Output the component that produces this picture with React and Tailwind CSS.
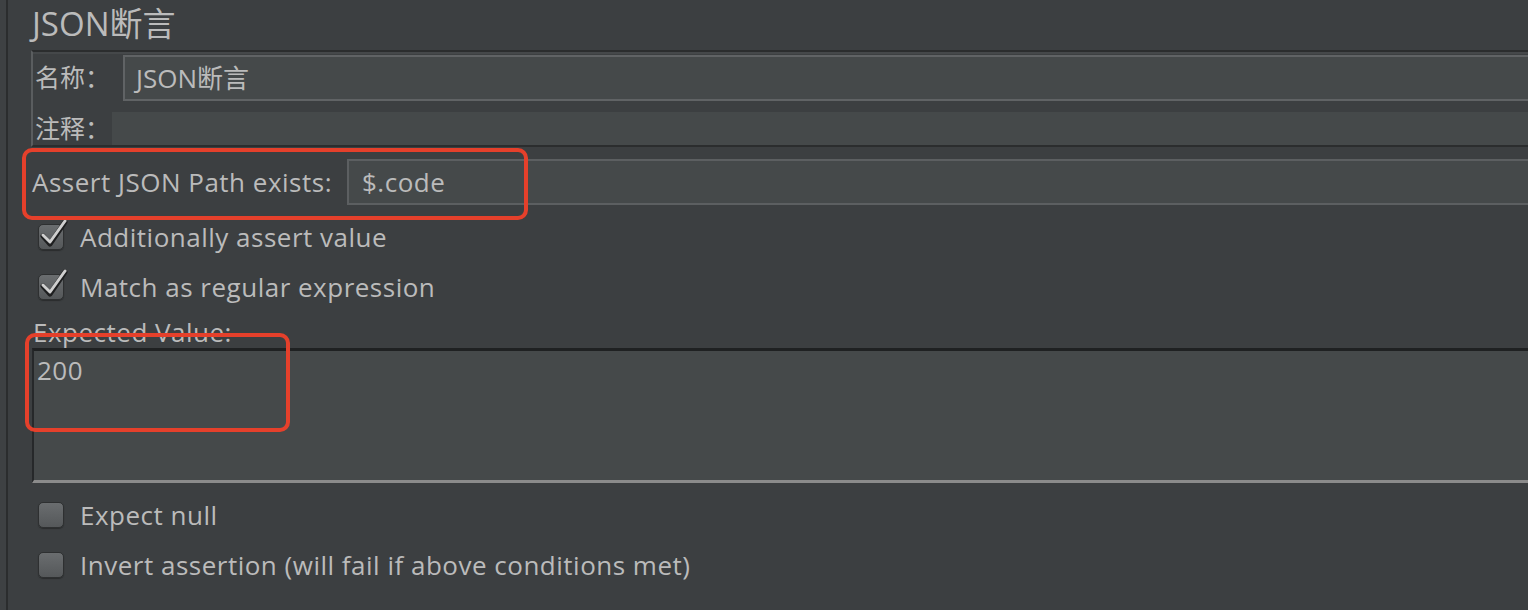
import React from 'react';

const font = { fontFamily: '"Open Sans", "Noto Sans CJK SC", sans-serif' };

function Checkbox({ checked }) {
  return (
    <div className="relative w-[26px] h-[26px] shrink-0">
      <div className="absolute inset-0 rounded-[5px] bg-gradient-to-b from-[#6a6d6f] to-[#55585a] border border-[#2e3031] shadow-[0_1px_1px_#2a2c2d]" />
      {checked && (
        <svg className="absolute left-[2px] top-[-5px]" width="28" height="30" viewBox="0 0 28 30">
          <path d="M3 17 L10 25 L25 3" fill="none" stroke="#1e1f20" strokeWidth="5" strokeLinecap="round" strokeLinejoin="round" />
          <path d="M3 16 L10 23 L25 2" fill="none" stroke="#cfcfcf" strokeWidth="3" strokeLinecap="round" strokeLinejoin="round" />
        </svg>
      )}
    </div>
  );
}

function CheckRow({ checked, label }) {
  return (
    <div className="h-[50px] flex items-center pl-[7px] gap-[16px]">
      <Checkbox checked={checked} />
      <span className="text-[26px] tracking-[0.5px] text-[#bbbbbb] leading-none">{label}</span>
    </div>
  );
}

export default function App() {
  return (
    <div className="relative w-[1528px] h-[610px] bg-[#3c3f41] overflow-hidden flex" style={font}>
      <div className="w-[8px] shrink-0 bg-[#3e4143] border-r-2 border-[#2b2d2e]" />
      <div className="flex-1 flex flex-col pl-[23px]">
        <div className="h-[50px] flex items-start">
          <span className="block text-[33px] text-[#bbbbbb] leading-[48px] pl-[1px]">JSON断言</span>
        </div>

        <div className="h-[97px] border-t-2 border-l-2 border-b-2 border-t-[#2b2d2e] border-l-[#5a5d5f] border-b-[#2b2d2e] flex flex-col">
          <div className="h-[2px] bg-[#45484a]" />
          <div className="h-[46px] flex items-center mt-[1px]">
            <span className="w-[90px] pl-[2px] text-[25px] text-[#bbbbbb]">名称：</span>
            <div className="flex-1 h-full bg-[#45494a] border-2 border-[#606365] border-r-0 flex items-center pl-[11px] text-[26px] text-[#bbbbbb]">
              JSON断言
            </div>
          </div>
          <div className="h-[33px] flex items-center mt-[11px]">
            <span className="w-[79px] pl-[2px] text-[25px] text-[#bbbbbb]">注释：</span>
            <div className="flex-1 h-full bg-[#45494a]" />
          </div>
        </div>

        <div className="h-[46px] mt-[12px] flex items-center">
          <span className="w-[316px] pl-[1px] text-[26px] tracking-[0.5px] text-[#bbbbbb]">Assert JSON Path exists:</span>
          <div className="flex-1 h-full bg-[#45494a] border-2 border-[#5c5f61] border-r-0 flex items-center pl-[13px] text-[26px] tracking-[0.5px] text-[#bbbbbb]">
            $.code
          </div>
        </div>

        <div className="mt-[7px]">
          <CheckRow checked label="Additionally assert value" />
          <CheckRow checked label="Match as regular expression" />
        </div>

        <div className="h-[36px] flex items-center pl-[2px]">
          <span className="text-[26px] tracking-[0.5px] text-[#bbbbbb] leading-none pt-[4px]">Expected Value:</span>
        </div>

        <div className="h-[135px] ml-[1px] bg-[#45494a] border-t-[3px] border-l-[2px] border-t-[#1f2122] border-l-[#26282a] border-b-[3px] border-b-[#8b8b8b] px-[3px] pt-[6px]">
          <span className="text-[26px] tracking-[0.5px] text-[#bbbbbb] leading-none">200</span>
        </div>

        <div className="mt-[7px]">
          <CheckRow checked={false} label="Expect null" />
          <CheckRow checked={false} label="Invert assertion (will fail if above conditions met)" />
        </div>
      </div>

      <div className="absolute left-[22px] top-[148px] w-[506px] h-[72px] border-[4px] border-[#e5402b] rounded-[10px] pointer-events-none" />
      <div className="absolute left-[25px] top-[333px] w-[265px] h-[99px] border-[4px] border-[#e5402b] rounded-[10px] pointer-events-none" />
    </div>
  );
}
